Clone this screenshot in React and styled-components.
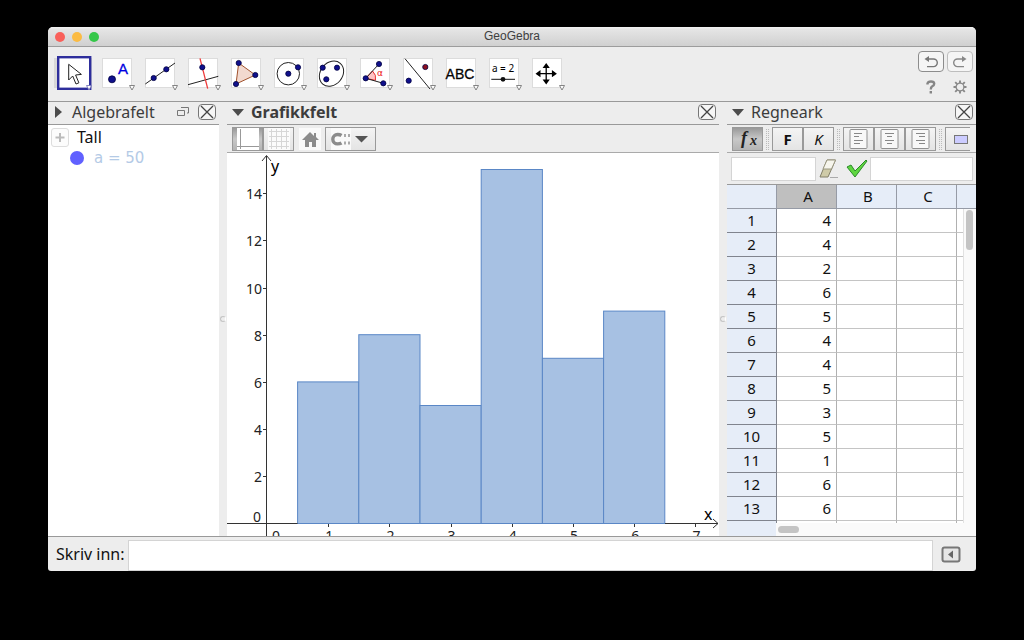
import React from "react";
import styled, { createGlobalStyle, css } from "styled-components";

const GlobalStyle = createGlobalStyle`
  * { box-sizing: border-box; }
  html, body, #root { height: 100%; }
  body {
    margin: 0;
    background: #000;
    color: #111;
    font: 15px/20px "Noto Sans", "Open Sans", sans-serif;
  }
  button, input { font: inherit; color: inherit; margin: 0; padding: 0; border: 0; }
  button { background: none; cursor: default; }
  svg { display: block; }
`;

const Desktop = styled.div`
  height: 100%;
  padding: 27px 48px 69px;
  display: flex;
`;

const Window = styled.div`
  flex: 1;
  min-width: 0;
  display: flex;
  flex-direction: column;
  background: #ededed;
  border-radius: 5px 5px 3px 3px;
  overflow: hidden;
`;

const TitleBar = styled.header`
  flex: none;
  display: grid;
  grid-template-columns: 1fr auto 1fr;
  align-items: center;
  height: 20px;
  padding: 0 7px;
  background: linear-gradient(#f2f2f2, #e4e4e4 15%, #d0d0d0);
  border-bottom: 1px solid #9c9c9c;
`;

const Lights = styled.div`
  display: flex;
  gap: 7px;
`;

const Light = styled.button`
  width: 10px;
  height: 10px;
  border-radius: 50%;
  background: ${(p) => p.$color};
`;

const WindowTitle = styled.h1`
  margin: 0;
  padding-bottom: 1px;
  font: 12px/18px "Liberation Sans", sans-serif;
  color: #404040;
`;

const Toolbar = styled.div`
  flex: none;
  display: flex;
  justify-content: space-between;
  height: 55px;
  padding: 4px 3px 4px 4px;
  border-bottom: 1px solid #999;
`;

const Tools = styled.div`
  display: flex;
  padding-top: 1px;
`;

const ToolButton = styled.button`
  width: 43px;
  height: 43px;
`;

const HistoryGrid = styled.div`
  display: grid;
  grid-template-columns: 26px 26px;
  grid-template-rows: 21px 30px;
  column-gap: 3px;
`;

const SmallButton = styled.button`
  display: flex;
  align-items: center;
  justify-content: center;
  ${(p) =>
    p.$framed &&
    css`
      border: 1px solid ${p.$faint ? "#bdbdbd" : "#8c8c8c"};
      border-radius: 4px;
      background: #f5f5f5;
    `}
`;

const Workspace = styled.main`
  flex: 1;
  min-height: 0;
  display: grid;
  grid-template-columns: 171px 8px minmax(0, 1fr) 8px 249px;
`;

const Panel = styled.section`
  min-width: 0;
  min-height: 0;
  display: flex;
  flex-direction: column;
  overflow: hidden;
`;

const PanelHeader = styled.div`
  flex: none;
  display: flex;
  align-items: center;
  gap: ${(p) => p.$gap || 7}px;
  height: 23px;
  padding: 0 3px 2px 5px;
  border-bottom: 1px solid #999;
`;

const PanelTitle = styled.h2`
  flex: 1;
  margin: 0;
  font-size: 16px;
  line-height: 20px;
  font-weight: ${(p) => (p.$active ? 700 : 400)};
  color: #3c3c3c;
`;

const CloseButton = styled.button`
  width: 18px;
  height: 16px;
  border: 1px solid #777;
  border-radius: 4px;
  background: #f6f6f6;
`;

const Splitter = styled.div`
  display: flex;
  align-items: center;
  justify-content: center;
  &::after {
    content: "";
    width: 4px;
    height: 4px;
    border: 1px solid #c4c4c4;
    border-right-color: #fff;
    border-radius: 50%;
  }
`;

const AlgebraList = styled.div`
  flex: 1;
  padding: 2px 3px;
  display: flex;
  flex-direction: column;
  gap: 1px;
  background: #fff;
  font-size: 16px;
`;

const AlgebraRow = styled.div`
  display: flex;
  align-items: center;
  gap: 8px;
  height: 20px;
`;

const ExpandButton = styled.button`
  width: 18px;
  height: 19px;
  border: 1px solid #ddd;
  border-radius: 3px;
  background: #fcfcfc;
`;

const Marble = styled.button`
  width: 14px;
  height: 14px;
  margin-left: 19px;
  border-radius: 50%;
  background: #6161ff;
`;

const AlgebraValue = styled.span`
  padding-left: 2px;
  font-family: "DejaVu Sans", sans-serif;
  font-size: 15px;
  color: #b4cae6;
`;

const StyleBar = styled.div`
  flex: none;
  display: flex;
  align-items: center;
  height: 28px;
  padding: 1px 0 0 5px;
  border-bottom: 1px solid #aaa;
  overflow: hidden;
`;

const ButtonGroup = styled.div`
  flex: none;
  display: flex;
  & > * + * { border-left: 0; }
`;

const BarButton = styled.button`
  flex: none;
  display: flex;
  align-items: center;
  justify-content: center;
  width: ${(p) => p.$width || 31}px;
  height: 24px;
  border: 1px solid #999;
  ${(p) => p.$open && "border-right: 0;"}
  background: ${(p) =>
    p.$pressed ? "linear-gradient(#999, #c8c8c8 50%, #b4b4b4)" : "linear-gradient(#f4f4f4, #e4e4e4)"};
  font-weight: ${(p) => (p.$bold ? 700 : 400)};
  font-style: ${(p) => (p.$italic ? "italic" : "normal")};
`;

const HomeButton = styled.button`
  width: 22px;
  height: 22px;
  margin: 0 4px 0 5px;
  background: #fafafa;
`;

const Separator = styled.span`
  flex: none;
  width: 3px;
  height: 21px;
  margin: 0 3px;
  border: dotted #bbb;
  border-width: 0 1px;
`;

const ChartArea = styled.div`
  flex: 1;
  min-height: 0;
  background: #fff;
  svg { width: 100%; height: 100%; }
`;

const FormulaBar = styled.div`
  flex: none;
  display: flex;
  align-items: center;
  height: 31px;
  padding: 0 3px 0 4px;
`;

const Field = styled.input`
  flex: ${(p) => (p.$width ? "none" : 1)};
  width: ${(p) => (p.$width ? `${p.$width}px` : "auto")};
  min-width: 0;
  height: 24px;
  border: 1px solid #d4d4d4;
  background: #fff;
`;

const IconButton = styled.button`
  flex: none;
  width: 24px;
  height: 24px;
  margin-left: 3px;
`;

const SheetScroller = styled.div`
  position: relative;
  flex: 1;
  min-height: 0;
  overflow: hidden;
  background: #fff;
  border-top: 1px solid #999;
`;

const Sheet = styled.table`
  width: 100%;
  table-layout: fixed;
  border-collapse: separate;
  border-spacing: 0;
  th, td { height: 24px; padding: 0 0 2px; line-height: 20px; font-weight: 400; }
  th { background: #e6edf8; }
  thead th { border: solid #969ba6; border-width: 0 1px 1px 0; }
  thead th:last-child { border-right: 0; }
  tbody th { border: solid #80848e; border-width: 0 1px 1px 0; }
  td {
    padding-right: 5px;
    text-align: right;
    border: solid #c4c4c4;
    border-width: 0 1px 1px 0;
    border-right-color: #b0b0b0;
  }
`;

const ColumnHead = styled.th`
  &&& { background: ${(p) => (p.$selected ? "#bfbfbf" : "#e6edf8")}; padding-left: 3px; }
`;

const Col = styled.col`
  width: ${(p) => p.$width};
`;

const VerticalTrack = styled.div`
  position: absolute;
  top: 24px;
  right: 0;
  bottom: 0;
  width: 13px;
  padding: 1px 2px;
  background: #fafafa;
  border-left: 1px solid #e2e2e2;
`;

const Thumb = styled.div`
  width: ${(p) => p.$width}px;
  height: ${(p) => p.$height}px;
  border-radius: 4px;
  background: #c4c4c4;
`;

const HorizontalTrack = styled.div`
  flex: none;
  height: 13px;
  padding: 3px 0 3px 51px;
  background: linear-gradient(90deg, #e6edf8 49px, #fafafa 49px);
`;

const InputBar = styled.footer`
  flex: none;
  display: flex;
  align-items: center;
  height: 35px;
  padding: 2px 15px 0 8px;
  border-top: 1px solid #999;
`;

const CommandLabel = styled.label`
  width: 72px;
  padding-bottom: 2px;
  font-size: 16px;
  white-space: nowrap;
`;

const CommandField = styled(Field)`
  height: 31px;
`;

const HelpToggle = styled.button`
  width: 20px;
  height: 18px;
  margin-left: 8px;
`;

const Dot = ({ x, y, r = 2.6, fill = "#10108c" }) => (
  <circle cx={x} cy={y} r={r} fill={fill} stroke="#000040" strokeWidth="0.8" />
);

const tools = [
  {
    name: "Flytt",
    art: <path d="M16.7 12.3V28l4-4 3.300 8 2.900-1.200L23.600 23l5.800-.6z" fill="#fff" stroke="#222" />,
  },
  {
    name: "Punkt",
    art: (
      <>
        <Dot x={17} y={27.3} r={3.5} />
        <text x="23" y="22" fontFamily="Liberation Sans, sans-serif" fontSize="15" fill="#0000e0" stroke="#0000e0" strokeWidth="0.3">A</text>
      </>
    ),
  },
  {
    name: "Linje",
    art: (
      <>
        <path d="M7.3 32L37 11" stroke="#222" />
        <Dot x={15.7} y={26} />
        <Dot x={28.3} y={17.3} />
      </>
    ),
  },
  {
    name: "Normal",
    art: (
      <>
        <path d="M7 32.7l30.3-8.4" stroke="#222" />
        <path d="M19 6.3l7.7 30.4" stroke="#ee3b3b" strokeWidth="1.3" />
        <Dot x={21.3} y={15.3} />
      </>
    ),
  },
  {
    name: "Mangekant",
    art: (
      <>
        <path d="M14.7 11l16.6 12L12 32z" fill="#f2d9cf" stroke="#a0522d" />
        <Dot x={14.7} y={11} />
        <Dot x={31.3} y={23} />
        <Dot x={12} y={32} />
      </>
    ),
  },
  {
    name: "Sirkel",
    art: (
      <>
        <circle cx="21.3" cy="21.7" r="11.2" fill="none" stroke="#222" />
        <Dot x={21.3} y={21.7} />
        <Dot x={31} y={15.3} />
      </>
    ),
  },
  {
    name: "Ellipse",
    art: (
      <>
        <ellipse cx="21.5" cy="21.7" rx="13.6" ry="11" transform="rotate(-50 21.5 21.7)" fill="none" stroke="#222" />
        <Dot x={12.7} y={15.7} />
        <Dot x={27} y={15.7} />
        <Dot x={16.3} y={27.3} />
      </>
    ),
  },
  {
    name: "Vinkel",
    art: (
      <>
        <path d="M12.7 26.3L19.5 19a10 10 0 013 9.3z" fill="#ffc4c4" stroke="#e33" />
        <path d="M26 12L12.7 26.3l17.6 5" fill="none" stroke="#222" />
        <Dot x={12.7} y={26.3} />
        <Dot x={26} y={12} />
        <Dot x={30.3} y={31.3} />
        <text x="24" y="24" fontFamily="DejaVu Sans, sans-serif" fontSize="9" fill="#e11">α</text>
      </>
    ),
  },
  {
    name: "Speiling",
    art: (
      <>
        <path d="M9 6.7L34 37" stroke="#222" />
        <Dot x={29.3} y={15} fill="#8c1020" />
        <Dot x={12.7} y={28.7} />
      </>
    ),
  },
  {
    name: "Tekst",
    art: <text x="21" y="27" textAnchor="middle" fontFamily="Liberation Sans, sans-serif" fontSize="14" stroke="#111" strokeWidth="0.3">ABC</text>,
  },
  {
    name: "Glider",
    art: (
      <>
        <text x="21" y="20" textAnchor="middle" fontFamily="Noto Sans, sans-serif" fontSize="10">a = 2</text>
        <path d="M9.3 27.3H33" stroke="#111" />
        <circle cx="21" cy="27.3" r="2.4" fill="#111" />
      </>
    ),
  },
  {
    name: "Flytt grafikkfeltet",
    art: (
      <>
        <path d="M21.2 14v15.4M13.5 21.7h15.4" stroke="#000" strokeWidth="1.3" />
        <path d="M21.2 11l3.6 5h-7.2zM21.2 32.4l3.6-5h-7.2zM10.5 21.7l5-3.6v7.2zM31.9 21.7l-5-3.6v7.2z" />
      </>
    ),
  },
];

function Tool({ name, art, selected }) {
  return (
    <ToolButton aria-label={name} aria-pressed={selected}>
      <svg width="43" height="43" viewBox="0 0 43 43">
        {selected ? (
          <>
            <rect x="2" y="6" width="38" height="30" fill="#d8d8d8" />
            <rect x="6.2" y="5.2" width="32" height="31.6" fill="#fff" stroke="#2e2e9c" strokeWidth="2.4" />
          </>
        ) : (
          <rect x="7.5" y="6.5" width="29" height="29" fill="#fff" stroke="#dcdcdc" />
        )}
        {art}
        <path d="M34.5 33.5h5L37 38z" fill="#fff" stroke={selected ? "#7777bb" : "#777"} strokeWidth="0.9" />
      </svg>
    </ToolButton>
  );
}

const DownArrow = () => (
  <svg width="12" height="8"><path d="M0 1h12L6 8z" fill="#4c4c4c" /></svg>
);

const Close = ({ panel }) => (
  <CloseButton aria-label={`Lukk ${panel}`}>
    <svg width="16" height="14"><path d="M2 1l12 12M14 1L2 13" stroke="#444" strokeWidth="1.3" /></svg>
  </CloseButton>
);

const bars = [6, 8, 5, 15, 7, 9];
const origin = { x: 40, y: 370.5 };
const unit = { x: 61.2, y: 23.6 };

function Histogram() {
  const labelFont = { fontSize: 14, fill: "#222" };
  return (
    <svg viewBox="0 0 491 383" preserveAspectRatio="xMinYMin meet" role="img" aria-label="Histogram">
      {bars.map((value, i) => (
        <rect
          key={i}
          x={origin.x + (i + 0.5) * unit.x}
          y={origin.y - value * unit.y}
          width={unit.x}
          height={value * unit.y}
          fill="#a7c1e3"
          stroke="#5a87c6"
        />
      ))}
      <path d="M39.5 383V3M35 8l4.500-5.500L44 8" fill="none" stroke="#333" />
      <path d={`M0 370.5h${origin.x + unit.x / 2}M438 370.5h53M486 366l5 4.500-5 4.500`} fill="none" stroke="#333" />
      {[2, 4, 6, 8, 10, 12, 14].map((n) => (
        <g key={n}>
          <path d={`M36 ${Math.round(origin.y - n * unit.y) + 0.5}h3`} stroke="#333" />
          <text x="35" y={origin.y - n * unit.y + 6} textAnchor="end" {...labelFont}>{n}</text>
        </g>
      ))}
      {[1, 2, 3, 4, 5, 6, 7].map((n) => (
        <g key={n}>
          <path d={`M${Math.round(origin.x + n * unit.x) + 0.5} 371v3`} stroke="#333" />
          <text x={origin.x + n * unit.x + 1} y="388" textAnchor="middle" {...labelFont}>{n}</text>
        </g>
      ))}
      <text x="34" y="369" textAnchor="end" {...labelFont}>0</text>
      <text x="49" y="388" textAnchor="middle" {...labelFont}>0</text>
      <text x="44" y="19" fontSize="16">y</text>
      <text x="477" y="367" fontSize="16">x</text>
    </svg>
  );
}

const alignments = [
  { name: "Venstrejuster", d: "M5 5.5h8M5 8.5h5M5 12.5h9M5 15.5h6" },
  { name: "Midtstill", d: "M5 5.5h9M7 8.5h5M5 12.5h9M7 15.5h5" },
  { name: "Høyrejuster", d: "M5 5.5h9M8 8.5h6M5 12.5h9M8 15.5h6" },
];

const columnA = [4, 4, 2, 6, 5, 4, 4, 5, 3, 5, 1, 6, 6, ""];

export default function App() {
  return (
    <>
      <GlobalStyle />
      <Desktop>
        <Window>
          <TitleBar>
            <Lights>
              <Light $color="#f9605a" aria-label="Lukk" />
              <Light $color="#fbbb43" aria-label="Minimer" />
              <Light $color="#35c749" aria-label="Zoom" />
            </Lights>
            <WindowTitle>GeoGebra</WindowTitle>
          </TitleBar>

          <Toolbar>
            <Tools>
              {tools.map((tool, i) => (
                <Tool key={tool.name} {...tool} selected={i === 0} />
              ))}
            </Tools>
            <HistoryGrid>
              <SmallButton $framed aria-label="Angre">
                <svg width="16" height="14" fill="none" stroke="#777" strokeWidth="1.4">
                  <path d="M3 4h7.500a3.800 3.800 0 010 7.600H4" />
                  <path d="M6 1L1.500 4 6 7z" fill="#777" stroke="none" />
                </svg>
              </SmallButton>
              <SmallButton $framed $faint aria-label="Gjør om">
                <svg width="16" height="14" fill="none" stroke="#888" strokeWidth="1.4">
                  <path d="M13 4H5.500a3.800 3.800 0 000 7.600H12" />
                  <path d="M10 1l4.500 3L10 7z" fill="#888" stroke="none" />
                </svg>
              </SmallButton>
              <SmallButton aria-label="Hjelp">
                <svg width="10" height="14" fill="none" stroke="#858585" strokeWidth="2.4">
                  <path d="M1.500 4.500V3.500Q2 1.500 5 1.500t3.200 2.200Q8.200 5.500 6 6.500q-1.200.8-1.200 3M4.800 11v2.500" />
                </svg>
              </SmallButton>
              <SmallButton aria-label="Innstillinger">
                <svg width="14" height="14" fill="none" stroke="#888">
                  <circle cx="7" cy="7" r="3.900" strokeWidth="1.300" />
                  <path d="M7 .5v2.600M7 10.900v2.600M.5 7h2.600M10.900 7h2.600M2.200 2.200l2 2M9.800 9.800l2 2M2.200 11.800l2-2M9.800 4.200l2-2" strokeWidth="1.900" />
                </svg>
              </SmallButton>
            </HistoryGrid>
          </Toolbar>

          <Workspace>
            <Panel>
              <PanelHeader $gap={9}>
                <svg width="10" height="14"><path d="M2 1v12l7-6z" fill="#4c4c4c" /></svg>
                <PanelTitle>Algebrafelt</PanelTitle>
                <svg width="12" height="10" fill="none" stroke="#777">
                  <path d="M.5 3.500h7v5h-7zM4 .5h7.500V6H10" />
                </svg>
                <Close panel="Algebrafelt" />
              </PanelHeader>
              <AlgebraList>
                <AlgebraRow>
                  <ExpandButton aria-label="Utvid">
                    <svg width="16" height="17"><path d="M8 4v9M3.500 8.500h9" stroke="#bbb" strokeWidth="2" /></svg>
                  </ExpandButton>
                  Tall
                </AlgebraRow>
                <AlgebraRow>
                  <Marble aria-label="Vis a" />
                  <AlgebraValue>a = 50</AlgebraValue>
                </AlgebraRow>
              </AlgebraList>
            </Panel>

            <Splitter />

            <Panel>
              <PanelHeader>
                <DownArrow />
                <PanelTitle $active>Grafikkfelt</PanelTitle>
                <Close panel="Grafikkfelt" />
              </PanelHeader>
              <StyleBar>
                <ButtonGroup>
                  <BarButton $pressed aria-label="Akser">
                    <svg width="22" height="22">
                      <path d="M0 0h22v22H0z" fill="#fff" />
                      <path d="M3.500 1v20M0 18.500h22" stroke="#999" />
                    </svg>
                  </BarButton>
                  <BarButton aria-label="Rutenett">
                    <svg width="22" height="22">
                      <path d="M0 0h22v22H0z" fill="#fbfbfb" />
                      <path d="M3.500 1v20M8.500 1v20M13.500 1v20M18.500 1v20M1 3.500h20M1 8.500h20M1 13.500h20M1 18.500h20" stroke="#d6d6d6" />
                    </svg>
                  </BarButton>
                </ButtonGroup>
                <HomeButton aria-label="Standardvisning">
                  <svg width="22" height="22"><path d="M11 4L3 12h3v7h4v-5h3v5h4v-7h3l-3-3V5h-2v3z" fill="#8c8c8c" /></svg>
                </HomeButton>
                <BarButton $width={51} aria-label="Feste til rutenett">
                  <svg width="39" height="22">
                    <path d="M0 0h20v22H0z" fill="#fafafa" />
                    <path d="M10.500 7.500Q9 6.500 6.500 6.500a4.700 4.700 0 000 9.400Q9 15.900 10.500 15" fill="none" stroke="#8c8c8c" strokeWidth="3.400" />
                    <path d="M13 6h2v3h-2zM17 6h2v3h-2zM13 13.500h2v3h-2zM17 13.500h2v3h-2z" fill="#aaa" />
                    <path d="M24 8h13l-6.500 6.500z" fill="#555" />
                  </svg>
                </BarButton>
              </StyleBar>
              <ChartArea>
                <Histogram />
              </ChartArea>
            </Panel>

            <Splitter />

            <Panel>
              <PanelHeader>
                <DownArrow />
                <PanelTitle>Regneark</PanelTitle>
                <Close panel="Regneark" />
              </PanelHeader>
              <StyleBar>
                <BarButton $pressed aria-label="Vis inntastingsfelt">
                  <svg width="24" height="22" fill="#222">
                    <text x="5" y="16" fontFamily="Liberation Serif, serif" fontStyle="italic" fontWeight="700" fontSize="18">f</text>
                    <text x="14" y="17" fontFamily="Liberation Serif, serif" fontStyle="italic" fontWeight="700" fontSize="14">x</text>
                  </svg>
                </BarButton>
                <Separator />
                <ButtonGroup>
                  <BarButton $bold>F</BarButton>
                  <BarButton $italic>K</BarButton>
                </ButtonGroup>
                <Separator />
                <ButtonGroup>
                  {alignments.map((a) => (
                    <BarButton key={a.name} aria-label={a.name}>
                      <svg width="19" height="22">
                        <rect x="1" y="1.500" width="17" height="19" rx="1" fill="#f8f8f8" stroke="#909090" />
                        <path d={a.d} stroke="#888" />
                      </svg>
                    </BarButton>
                  ))}
                </ButtonGroup>
                <Separator />
                <BarButton $width={25} $open aria-label="Bakgrunnsfarge">
                  <svg width="24" height="10"><rect x="8.500" y="1.500" width="13" height="8" fill="#ccccff" stroke="#777" /></svg>
                </BarButton>
              </StyleBar>
              <FormulaBar>
                <Field $width={85} aria-label="Cellenavn" />
                <IconButton aria-label="Slett">
                  <svg width="24" height="24">
                    <path d="M8 3h8.500L9 20H1z" fill="#cfcba8" stroke="#827f68" />
                    <path d="M8 3h8.500l-4 9H4z" fill="#f6f5ec" stroke="#9a9780" />
                    <path d="M11 20.500h8" stroke="#aaa" />
                  </svg>
                </IconButton>
                <IconButton aria-label="Godta">
                  <svg width="24" height="24">
                    <path d="M1 10l4-2 4 6L20 3l1 1L9 20z" fill="#5fd63f" stroke="#2b8a2b" />
                  </svg>
                </IconButton>
                <Field aria-label="Celleinnhold" />
              </FormulaBar>
              <SheetScroller>
                <Sheet>
                  <colgroup>
                    <Col $width="50px" />
                    <Col $width="60px" />
                    <Col $width="60px" />
                    <Col $width="60px" />
                    <Col $width="auto" />
                  </colgroup>
                  <thead>
                    <tr>
                      <th />
                      <ColumnHead scope="col" $selected>A</ColumnHead>
                      <ColumnHead scope="col">B</ColumnHead>
                      <ColumnHead scope="col">C</ColumnHead>
                      <ColumnHead />
                    </tr>
                  </thead>
                  <tbody>
                    {columnA.map((value, i) => (
                      <tr key={i}>
                        <th scope="row">{value === "" ? "" : i + 1}</th>
                        <td>{value}</td>
                        <td />
                        <td />
                        <td />
                      </tr>
                    ))}
                  </tbody>
                </Sheet>
                <VerticalTrack>
                  <Thumb $width={7} $height={40} />
                </VerticalTrack>
              </SheetScroller>
              <HorizontalTrack>
                <Thumb $width={21} $height={7} />
              </HorizontalTrack>
            </Panel>
          </Workspace>

          <InputBar>
            <CommandLabel htmlFor="command">Skriv inn:</CommandLabel>
            <CommandField id="command" />
            <HelpToggle aria-label="Inntastingshjelp">
              <svg width="20" height="18">
                <rect x="1.500" y="1.500" width="17" height="14" rx="2" fill="#e6e6e6" stroke="#777" strokeWidth="2" />
                <path d="M12 4.500v8L7 8.500z" fill="#666" />
              </svg>
            </HelpToggle>
          </InputBar>
        </Window>
      </Desktop>
    </>
  );
}
